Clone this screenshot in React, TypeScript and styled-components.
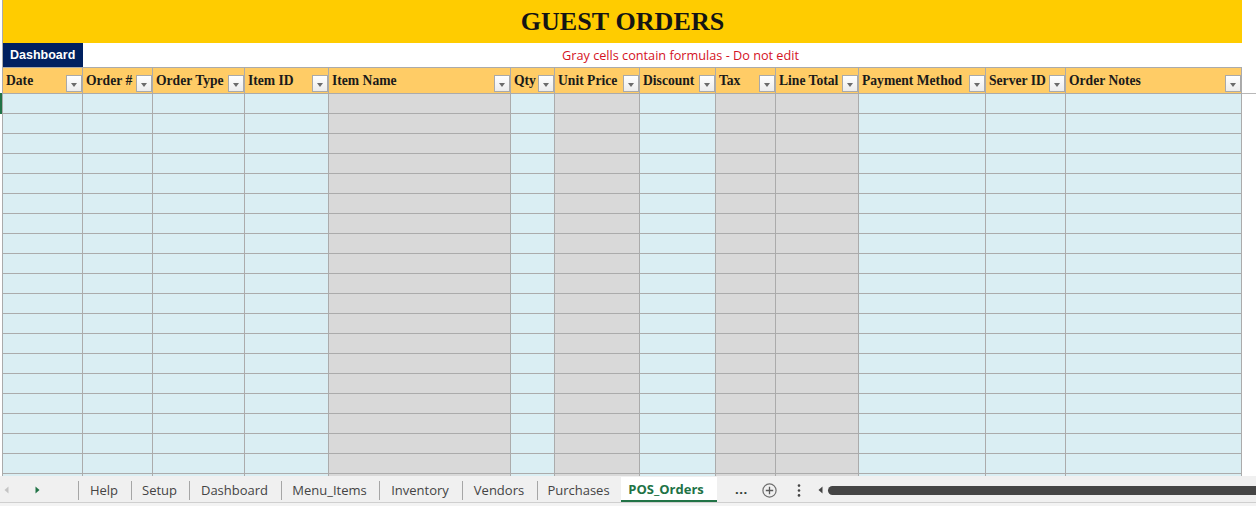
import React from 'react';
import styled, { createGlobalStyle } from 'styled-components';

const GlobalStyle = createGlobalStyle`
  html, body { margin: 0; padding: 0; background: #ffffff; overflow: hidden; }
  #root { width: 1256px; height: 506px; display: flex; flex-direction: column; }
`;

type Kind = 'input' | 'formula';

const columns: { label: string; width: number; kind: Kind }[] = [
  { label: 'Date', width: 80, kind: 'input' },
  { label: 'Order #', width: 70, kind: 'input' },
  { label: 'Order Type', width: 92, kind: 'input' },
  { label: 'Item ID', width: 84, kind: 'input' },
  { label: 'Item Name', width: 182, kind: 'formula' },
  { label: 'Qty', width: 44, kind: 'input' },
  { label: 'Unit Price', width: 85, kind: 'formula' },
  { label: 'Discount', width: 76, kind: 'input' },
  { label: 'Tax', width: 60, kind: 'formula' },
  { label: 'Line Total', width: 83, kind: 'formula' },
  { label: 'Payment Method', width: 127, kind: 'input' },
  { label: 'Server ID', width: 80, kind: 'input' },
  { label: 'Order Notes', width: 176, kind: 'input' },
];

const tabs: { name: string; width: number }[] = [
  { name: 'Help', width: 52 },
  { name: 'Setup', width: 57 },
  { name: 'Dashboard', width: 91 },
  { name: 'Menu_Items', width: 97 },
  { name: 'Inventory', width: 82 },
  { name: 'Vendors', width: 74 },
  { name: 'Purchases', width: 83 },
];

const GRID_LINE = '#ABABAB';
const ROW_COUNT = 20;

const Sheet = styled.div`
  position: relative;
  height: 476px;
  flex: none;
  overflow: hidden;
  padding-left: 2px;
  background: #ffffff;
`;

const Grid = styled.div`
  display: grid;
  grid-template-columns: ${columns.map((c) => `${c.width}px`).join(' ')} 1fr;
  grid-template-rows: 43px 24px 27px;
  grid-auto-rows: 20px;
  border-left: 1px solid ${GRID_LINE};
`;

const Banner = styled.div`
  grid-column: 1 / span 13;
  background: #ffcc00;
  display: flex;
  align-items: center;
  justify-content: center;
  font-family: 'Liberation Serif', 'Times New Roman', serif;
  font-weight: 700;
  font-size: 26px;
  color: #141414;
  letter-spacing: 0.1px;
`;

const Blank = styled.div``;

const DashboardLink = styled.div`
  background: #002060;
  color: #ffffff;
  display: flex;
  align-items: center;
  padding-left: 7px;
  font-family: 'Liberation Sans', Arial, sans-serif;
  font-weight: 700;
  font-size: 12.5px;
`;

const Note = styled.div`
  grid-column: 2 / span 12;
  display: flex;
  align-items: center;
  justify-content: center;
  padding-left: 36px;
  font-family: 'Open Sans', 'Noto Sans', sans-serif;
  font-size: 12.7px;
  color: #d4121e;
`;

const HeaderCell = styled.div`
  box-sizing: border-box;
  background: #ffcc66;
  border-top: 1px solid ${GRID_LINE};
  border-bottom: 1px solid ${GRID_LINE};
  border-right: 1px solid ${GRID_LINE};
  display: flex;
  align-items: center;
  justify-content: space-between;
  padding-left: 3px;
  overflow: hidden;
`;

const HeaderLabel = styled.span`
  font-family: 'Liberation Serif', 'Times New Roman', serif;
  font-weight: 700;
  font-size: 13.6px;
  line-height: 16px;
  color: #1a1a1a;
  white-space: nowrap;
`;

const FilterButton = styled.span`
  box-sizing: border-box;
  flex: none;
  align-self: flex-end;
  width: 16px;
  height: 17px;
  margin-bottom: 1px;
  border: 1px solid #a9a9a9;
  background: linear-gradient(#ffffff, #ececec);
  display: flex;
  align-items: center;
  justify-content: center;

  &::after {
    content: '';
    width: 0;
    height: 0;
    margin-top: 2px;
    border-left: 3.5px solid transparent;
    border-right: 3.5px solid transparent;
    border-top: 4px solid #6b6b6b;
  }
`;

const HeaderTail = styled.div`
  border-bottom: 1px solid #b8b8b8;
`;

const Cell = styled.div<{ $kind: Kind }>`
  box-sizing: border-box;
  background: ${(p) => (p.$kind === 'formula' ? '#d9d9d9' : '#daeef3')};
  border-right: 1px solid ${GRID_LINE};
  border-bottom: 1px solid ${GRID_LINE};
`;

const ActiveMark = styled.div`
  position: absolute;
  left: 0;
  top: 93px;
  width: 2px;
  height: 21px;
  background: #217346;
`;

/* sheet tabs strip */

const TabBar = styled.div`
  box-sizing: border-box;
  height: 30px;
  flex: none;
  display: flex;
  align-items: stretch;
  background: #f0f0f0;
  padding-top: 1px;
  border-bottom: 3px solid #f3f3f3;
  box-shadow: inset 0 -1px 0 #cfcfcf;
  font-family: 'Open Sans', 'Noto Sans', sans-serif;
  font-size: 13px;
  color: #444444;
`;

const Nav = styled.div`
  width: 78px;
  flex: none;
  display: flex;
  align-items: center;
  padding-left: 4px;
  gap: 26px;
  box-sizing: border-box;
`;

const Separator = styled.span`
  flex: none;
  width: 1px;
  height: 19px;
  align-self: center;
  background: #a6a6a6;
`;

const Tab = styled.div<{ $width: number }>`
  width: ${(p) => p.$width}px;
  flex: none;
  display: flex;
  align-items: center;
  justify-content: center;
  padding-right: 2px;
  box-sizing: border-box;
  white-space: nowrap;
`;

const ActiveTab = styled.div`
  width: 96px;
  flex: none;
  display: flex;
  align-items: center;
  justify-content: center;
  box-sizing: border-box;
  background: #ffffff;
  border-bottom: 2px solid #217346;
  color: #217346;
  font-weight: 700;
  padding-right: 6px;
  margin-bottom: 1px;
`;

const More = styled.span`
  margin-left: 18px;
  align-self: center;
  font-weight: 700;
  color: #2e3b33;
  letter-spacing: 0.5px;
  padding-bottom: 2px;
`;

const IconSlot = styled.span<{ $gap: number }>`
  margin-left: ${(p) => p.$gap}px;
  display: flex;
  align-items: center;
`;

const Scroller = styled.div`
  flex: 1;
  margin-left: 17px;
  display: flex;
  align-items: center;
  gap: 5px;
`;

const Thumb = styled.div`
  flex: 1;
  height: 9px;
  background: #454545;
  border-radius: 5px 0 0 5px;
`;

const Arrow = ({ dir, color }: { dir: 'left' | 'right'; color: string }) => (
  <svg width="5" height="8" viewBox="0 0 5 8">
    {dir === 'left' ? (
      <polygon points="4.5,0.5 4.5,7.5 0.5,4" fill={color} />
    ) : (
      <polygon points="0.5,0.5 0.5,7.5 4.5,4" fill={color} />
    )}
  </svg>
);

const AddSheetIcon = () => (
  <svg width="15" height="15" viewBox="0 0 15 15">
    <circle cx="7.5" cy="7.5" r="6.6" fill="none" stroke="#6f6f6f" strokeWidth="1.2" />
    <path d="M7.5 3.8v7.4M3.8 7.5h7.4" stroke="#5a5a5a" strokeWidth="1.3" />
  </svg>
);

const KebabIcon = () => (
  <svg width="4" height="13" viewBox="0 0 4 13">
    <circle cx="2" cy="1.6" r="1.3" fill="#444" />
    <circle cx="2" cy="6.5" r="1.3" fill="#444" />
    <circle cx="2" cy="11.4" r="1.3" fill="#444" />
  </svg>
);

export default function App() {
  const rows = Array.from({ length: ROW_COUNT }, (_, r) => r);
  return (
    <>
      <GlobalStyle />
      <Sheet>
        <Grid>
          <Banner>GUEST ORDERS</Banner>
          <Blank />
          <DashboardLink>Dashboard</DashboardLink>
          <Note>Gray cells contain formulas - Do not edit</Note>
          <Blank />
          {columns.map((c) => (
            <HeaderCell key={c.label}>
              <HeaderLabel>{c.label}</HeaderLabel>
              <FilterButton />
            </HeaderCell>
          ))}
          <HeaderTail />
          {rows.map((r) => (
            <React.Fragment key={r}>
              {columns.map((c) => (
                <Cell key={c.label} $kind={c.kind} />
              ))}
              <Blank />
            </React.Fragment>
          ))}
        </Grid>
        <ActiveMark />
      </Sheet>
      <TabBar>
        <Nav>
          <Arrow dir="left" color="#c4c4c4" />
          <Arrow dir="right" color="#217346" />
        </Nav>
        {tabs.map((t) => (
          <React.Fragment key={t.name}>
            <Separator />
            <Tab $width={t.width}>{t.name}</Tab>
          </React.Fragment>
        ))}
        <ActiveTab>POS_Orders</ActiveTab>
        <More>...</More>
        <IconSlot $gap={14}>
          <AddSheetIcon />
        </IconSlot>
        <IconSlot $gap={20}>
          <KebabIcon />
        </IconSlot>
        <Scroller>
          <Arrow dir="left" color="#444" />
          <Thumb />
        </Scroller>
      </TabBar>
    </>
  );
}
